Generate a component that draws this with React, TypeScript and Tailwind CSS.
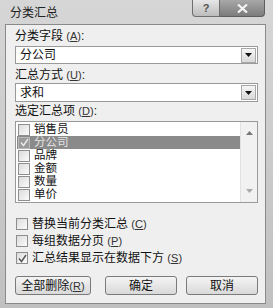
import type { ReactNode } from "react";

const cjk = { fontFamily: '"Liberation Sans", "Noto Sans CJK SC", sans-serif' };

const Key = ({ k }: { k: string }) => (
  <span className="text-[11px] text-[#333]">
    (<span className="underline">{k}</span>)
  </span>
);

const Box = ({ checked, dark }: { checked?: boolean; dark?: boolean }) => (
  <span
    className={`flex h-[12px] w-[12px] shrink-0 items-center justify-center border ${
      dark ? "border-[#b8b8b8] bg-[#9a9a9a]" : "border-[#8e8e8e] bg-gradient-to-br from-[#dcdcdc] to-[#fbfbfb]"
    }`}
  >
    {checked && (
      <svg width="9" height="9" viewBox="0 0 9 9">
        <path d="M1 4.5 L3.5 7.5 L8 1" fill="none" stroke={dark ? "#e8e8e8" : "#555"} strokeWidth="1.4" />
      </svg>
    )}
  </span>
);

const Select = ({ value, h }: { value: string; h: string }) => (
  <div className={`flex ${h} items-center justify-between border border-[#9a9a9a] bg-white pl-[4px] pr-[1px]`}>
    <span className="text-[12px] leading-[14px] text-[#111]">{value}</span>
    <span className="flex h-[15px] w-[15px] items-center justify-center border border-[#a8a8a8] bg-gradient-to-b from-[#f6f6f6] to-[#d8d8d8]">
      <svg width="7" height="4" viewBox="0 0 7 4">
        <path d="M0 0 H7 L3.5 4 Z" fill="#111" />
      </svg>
    </span>
  </div>
);

const Option = ({ label, k, checked }: { label: string; k: string; checked?: boolean }) => (
  <div className="flex h-[12px] items-center gap-[4px] pl-[1px]">
    <Box checked={checked} />
    <span className="text-[12px] leading-[12px] text-[#111]">
      {label} <Key k={k} />
    </span>
  </div>
);

const Button = ({ w, children }: { w: string; children: ReactNode }) => (
  <div
    className={`flex h-[19px] ${w} items-center justify-center rounded-[3px] border border-[#7a7a7a] bg-gradient-to-b from-[#f4f4f4] to-[#d9d9d9] text-[12px] leading-[14px] text-[#111]`}
  >
    {children}
  </div>
);

const items = ["销售员", "分公司", "品牌", "金额", "数量", "单价"];

export default function App() {
  return (
    <div style={cjk} className="flex h-[308px] w-[273px] flex-col overflow-hidden bg-gradient-to-b from-[#d6d6d6] to-[#c0c0c0]">
      {/* title bar */}
      <div className="relative h-[24px] shrink-0">
        <span className="absolute left-[10px] top-[6px] text-[12px] leading-[14px] text-[#222]">分类汇总</span>
        <div className="absolute right-[8px] top-0 flex h-[17px]">
          <div className="flex w-[28px] items-center justify-center rounded-bl-[4px] border border-t-0 border-[#6e6e6e] bg-gradient-to-b from-[#e6e6e6] to-[#bcbcbc] text-[11px] font-bold text-[#555]">
            ?
          </div>
          <div className="flex w-[45px] items-center justify-center rounded-br-[4px] border border-l-0 border-t-0 border-[#5e5e5e] bg-gradient-to-b from-[#a8a8a8] to-[#7c7c7c]">
            <svg width="11" height="9" viewBox="0 0 11 9">
              <path d="M1 0.5 L10 8.5 M10 0.5 L1 8.5" stroke="#f4f4f4" strokeWidth="2.2" />
            </svg>
          </div>
        </div>
      </div>

      {/* body */}
      <div className="ml-[5px] flex h-[280px] w-[261px] flex-col border border-[#8a8a8a] bg-[#efefef] pl-[9px] pr-[7px]">
        <div className="mt-[5px] h-[13px] text-[12px] leading-[13px] text-[#111]">
          分类字段 <Key k="A" />:
        </div>
        <div className="mt-[3px]">
          <Select value="分公司" h="h-[18px]" />
        </div>
        <div className="mt-[5px] h-[13px] text-[12px] leading-[13px] text-[#111]">
          汇总方式 <Key k="U" />:
        </div>
        <div className="mt-[1px]">
          <Select value="求和" h="h-[19px]" />
        </div>
        <div className="mt-[3px] h-[13px] text-[12px] leading-[13px] text-[#111]">
          选定汇总项 <Key k="D" />:
        </div>

        {/* list */}
        <div className="mt-[3px] flex h-[82px] border border-[#9a9a9a] bg-white">
          <div className="flex flex-1 flex-col pl-[1px] pt-[1px]">
            {items.map((it, i) => {
              const sel = i === 1;
              return (
                <div
                  key={it}
                  className={`flex h-[13px] items-center gap-[4px] pl-[1px] ${sel ? "bg-[#8a8a8a]" : ""}`}
                >
                  <Box checked={sel} dark={sel} />
                  <span className={`text-[11.5px] leading-[13px] ${sel ? "text-[#e4e4e4]" : "text-[#111]"}`}>{it}</span>
                </div>
              );
            })}
          </div>
          <div className="flex w-[17px] flex-col items-center justify-between border-l border-[#e2e2e2] bg-[#f1f1f1] py-[9px]">
            <svg width="7" height="4" viewBox="0 0 7 4">
              <path d="M0 4 H7 L3.5 0 Z" fill="#777" />
            </svg>
            <svg width="7" height="4" viewBox="0 0 7 4">
              <path d="M0 0 H7 L3.5 4 Z" fill="#aaa" />
            </svg>
          </div>
        </div>

        <div className="mt-[15px]">
          <Option label="替换当前分类汇总" k="C" />
        </div>
        <div className="mt-[5px]">
          <Option label="每组数据分页" k="P" />
        </div>
        <div className="mt-[5px]">
          <Option label="汇总结果显示在数据下方" k="S" checked />
        </div>

        <div className="mt-[12px] flex">
          <Button w="w-[76px]">
            全部删除 <Key k="R" />
          </Button>
          <div className="ml-[14px]">
            <Button w="w-[72px]">确定</Button>
          </div>
          <div className="ml-[9px]">
            <Button w="w-[72px]">取消</Button>
          </div>
        </div>
      </div>
    </div>
  );
}
